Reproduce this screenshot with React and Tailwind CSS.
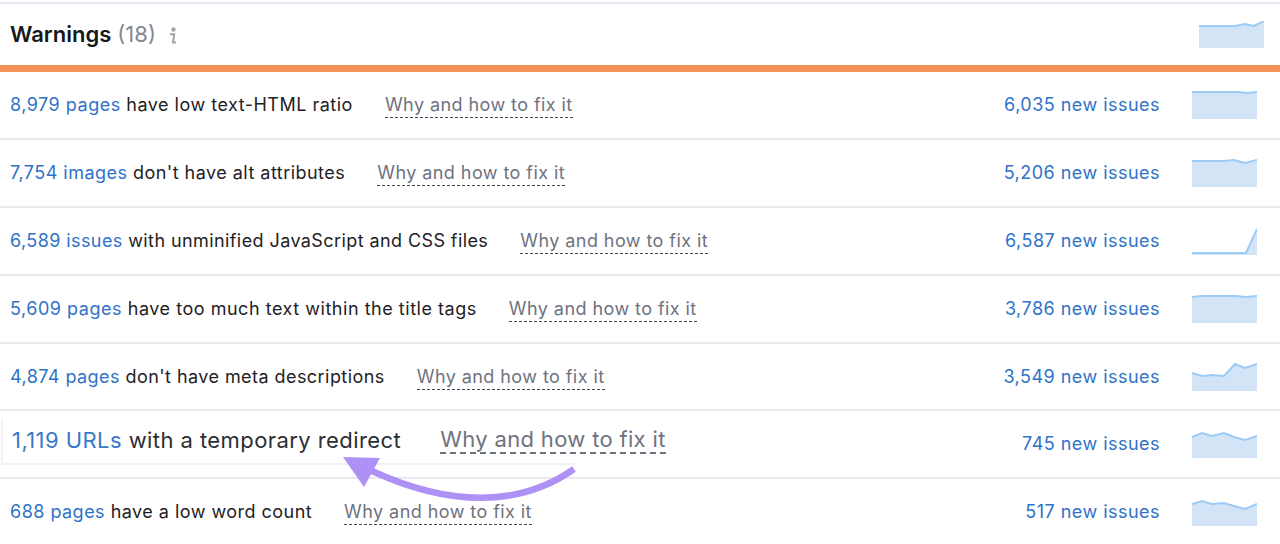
const rows = [
  { link: '8,979 pages', text: 'have low text-HTML ratio', issues: '6,035 new issues', line: '0,1 30,1 45,1 55,2 65,1', track: 'tracking-[0.5px]' },
  { link: '7,754 images', text: "don't have alt attributes", issues: '5,206 new issues', line: '0,2 32,2 42,1 53,4 65,1', track: 'tracking-[0.47px]' },
  { link: '6,589 issues', text: 'with unminified JavaScript and CSS files', issues: '6,587 new issues', line: '0,26 54,26 65,2', track: 'tracking-[0.41px]' },
  { link: '5,609 pages', text: 'have too much text within the title tags', issues: '3,786 new issues', line: '0,2 10,1 44,1 54,2 65,1', track: 'tracking-[0.53px]' },
  { link: '4,874 pages', text: "don't have meta descriptions", issues: '3,549 new issues', line: '0,10 10,13 20,12 32,13 43,1 53,5 65,1', track: 'tracking-[0.44px]', short: true },
  { link: '1,119 URLs', text: 'with a temporary redirect', issues: '745 new issues', line: '0,7 10,3 20,6 32,3 42,7 53,10 65,6', big: true },
  { link: '688 pages', text: 'have a low word count', issues: '517 new issues', line: '0,6 10,3 20,6 32,5 42,8 53,11 65,6', track: 'tracking-[0.47px]' },
]

function Spark({ line, w = 65, h = 28 }) {
  return (
    <svg width={w} height={h} viewBox={`0 0 ${w} ${h}`} className="block shrink-0">
      <polygon points={`${line} ${w},${h} 0,${h}`} fill="#d2e4f6" />
      <polyline points={line} fill="none" stroke="#9ccbf5" strokeWidth="2" />
    </svg>
  )
}

function InfoIcon() {
  return (
    <svg width="10" height="18" viewBox="0 0 10 18" className="ml-[12px] mt-[2px]">
      <circle cx="5.5" cy="2.5" r="2.2" fill="#a3a5ad" />
      <path d="M2 7.2h4.2L5 15.6h3" fill="none" stroke="#a3a5ad" strokeWidth="2" />
    </svg>
  )
}

function Row({ r }) {
  return (
    <div className={`${r.short ? 'h-[67px]' : 'h-[68px]'} border-b-2 border-[#e9e9ef] flex items-center justify-between pb-[2px] pl-[10px] pr-[23px]`}>
      {r.big ? (
        <div className="flex items-center gap-[39px] -ml-[9px] pl-[9px] pb-[2px] h-[46px] w-[574px] border-l-2 border-b-2 border-[#f1f1f5] translate-y-[-1px]">
          <span className="text-[22px] tracking-[0.43px] text-[#2b2e33] whitespace-nowrap">
            <span className="text-[#3a78c9]">{r.link}</span> {r.text}
          </span>
          <span className="text-[22px] tracking-[0.33px] text-[#6f727f] border-b-2 border-dashed border-[#6f727f] leading-[26px] whitespace-nowrap">Why and how to fix it</span>
        </div>
      ) : (
        <div className={`${r.short ? 'mt-[2px]' : ''} flex items-center gap-[32px]`}>
          <span className={`text-[18px] ${r.track} text-[#1f2125] whitespace-nowrap`}>
            <span className="text-[#2f72c9]">{r.link}</span> {r.text}
          </span>
          <span className="mt-[2px] text-[18px] tracking-[0.43px] text-[#6f727f] border-b border-dashed border-[#44464f] leading-[24px] whitespace-nowrap">Why and how to fix it</span>
        </div>
      )}
      <div className="flex items-center gap-[32px]">
        <span className={`${r.short ? 'mt-[2px]' : ''} text-[18px] tracking-[0.47px] text-[#2f72c9] whitespace-nowrap`}>{r.issues}</span>
        <div className="mt-[2px]">
          <Spark line={r.line} />
        </div>
      </div>
    </div>
  )
}

export default function App() {
  return (
    <div className="relative w-[1280px] h-[544px] overflow-hidden bg-white font-['Inter',sans-serif]">
      <div className="h-[4px] border-b-2 border-[#e6e6f0]" />
      <div className="h-[61px] flex items-center justify-between pl-[10px] pr-[16px]">
        <div className="flex items-center">
          <span className="text-[22px] font-semibold text-[#17181b]">Warnings</span>
          <span className="text-[22px] text-[#85878f] ml-[6px]">(18)</span>
          <InfoIcon />
        </div>
        <Spark line="0,5 36,5 46,3 55,5 65,0" h={27} />
      </div>
      <div className="h-[7px] bg-[#f29254]" />
      {rows.map((r) => (
        <Row key={r.link} r={r} />
      ))}
      <svg width="260" height="90" viewBox="0 0 260 90" className="absolute left-[330px] top-[445px]">
        <path d="M244 24 C190 62 120 62 42 26" fill="none" stroke="#ae91f5" strokeWidth="6.5" />
        <polygon points="13,12 50,13 34,42" fill="#ae91f5" />
      </svg>
    </div>
  )
}
